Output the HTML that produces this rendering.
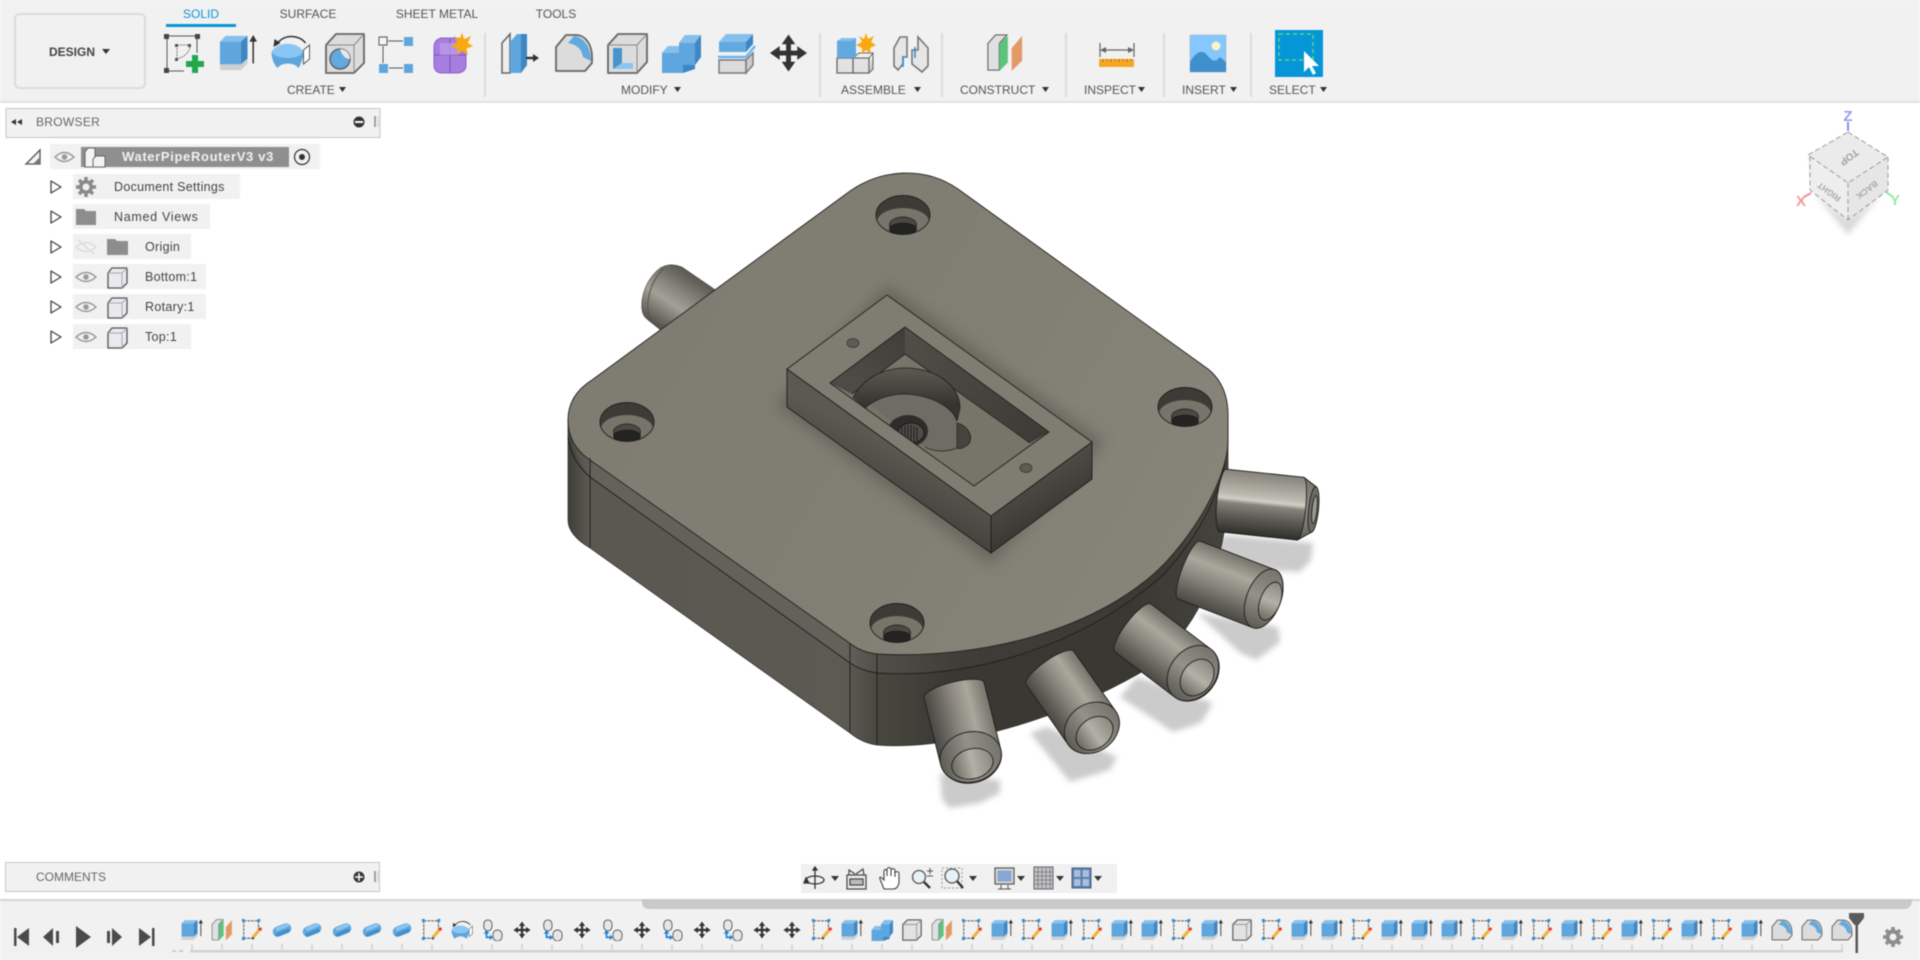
<!DOCTYPE html>
<html><head><meta charset="utf-8"><title>Fusion</title>
<style>
html,body{margin:0;padding:0;background:#fff;width:1920px;height:960px;overflow:hidden}
svg.main{position:absolute;left:0;top:0;filter:blur(.5px)}
text{font-family:"Liberation Sans",sans-serif}
</style></head><body>
<svg class="main" width="1920" height="960" viewBox="0 0 1920 960" xmlns="http://www.w3.org/2000/svg">
<defs>
<filter id="b2" x="-30%" y="-30%" width="160%" height="160%"><feGaussianBlur stdDeviation="3"/></filter>
<filter id="b6" x="-30%" y="-30%" width="160%" height="160%"><feGaussianBlur stdDeviation="7"/></filter>
<linearGradient id="cyl" x1="0" y1="0" x2="0" y2="1"><stop offset="0" stop-color="#75736a"/><stop offset=".3" stop-color="#aaa89d"/><stop offset=".55" stop-color="#8c8980"/><stop offset=".85" stop-color="#5e5c55"/><stop offset="1" stop-color="#4a4943"/></linearGradient>
<linearGradient id="cyl1" x1="0" y1="0" x2="0" y2="1"><stop offset="0" stop-color="#85837a"/><stop offset=".38" stop-color="#bdbbb0"/><stop offset=".45" stop-color="#d2d0c6"/><stop offset=".52" stop-color="#85837a"/><stop offset=".72" stop-color="#5e5c55"/><stop offset="1" stop-color="#2f2e2b"/></linearGradient>
<linearGradient id="cyl6" gradientUnits="userSpaceOnUse" x1="703" y1="283" x2="669" y2="335"><stop offset="0" stop-color="#5c5b54"/><stop offset=".35" stop-color="#8a887f"/><stop offset=".55" stop-color="#a3a197"/><stop offset="1" stop-color="#4f4e48"/></linearGradient>
<linearGradient id="tipg" x1="0" y1="0" x2="0" y2="1"><stop offset="0" stop-color="#75736b"/><stop offset=".5" stop-color="#93918a"/><stop offset="1" stop-color="#5c5b54"/></linearGradient>
<linearGradient id="bore" x1="0" y1="0" x2="0" y2="1"><stop offset="0" stop-color="#8c8a80"/><stop offset=".5" stop-color="#b3b1a7"/><stop offset="1" stop-color="#6b6960"/></linearGradient>
<linearGradient id="bodyg" gradientUnits="userSpaceOnUse" x1="568" y1="0" x2="1228" y2="0"><stop offset="0" stop-color="#3f3e39"/><stop offset=".03" stop-color="#5a5850"/><stop offset=".42" stop-color="#5c5a53"/><stop offset=".47" stop-color="#48473f"/><stop offset=".58" stop-color="#393833"/><stop offset=".85" stop-color="#393833"/><stop offset="1" stop-color="#45443e"/></linearGradient>
<linearGradient id="stripg" gradientUnits="userSpaceOnUse" x1="568" y1="0" x2="1228" y2="0"><stop offset="0" stop-color="#4a4943"/><stop offset=".04" stop-color="#64625b"/><stop offset=".42" stop-color="#63615a"/><stop offset=".47" stop-color="#4f4e47"/><stop offset=".6" stop-color="#3e3d38"/><stop offset=".9" stop-color="#3b3a35"/><stop offset="1" stop-color="#4d4c46"/></linearGradient>
<linearGradient id="plateg" gradientUnits="userSpaceOnUse" x1="600" y1="250" x2="1200" y2="600"><stop offset="0" stop-color="#7f7c72"/><stop offset=".5" stop-color="#817e73"/><stop offset="1" stop-color="#88857b"/></linearGradient>
<linearGradient id="fl1" gradientUnits="userSpaceOnUse" x1="850" y1="500" x2="880" y2="440"><stop offset="0" stop-color="#3c3b37"/><stop offset="1" stop-color="#5b5951"/></linearGradient>
<linearGradient id="fl2" gradientUnits="userSpaceOnUse" x1="1060" y1="510" x2="1030" y2="460"><stop offset="0" stop-color="#3a3934"/><stop offset="1" stop-color="#55534c"/></linearGradient>
<linearGradient id="wl" gradientUnits="userSpaceOnUse" x1="905" y1="330" x2="860" y2="385"><stop offset="0" stop-color="#3f3e39"/><stop offset="1" stop-color="#4c4b45"/></linearGradient>
<linearGradient id="wr" gradientUnits="userSpaceOnUse" x1="900" y1="330" x2="1040" y2="440"><stop offset="0" stop-color="#514f48"/><stop offset="1" stop-color="#3c3b37"/></linearGradient>
<linearGradient id="cw" gradientUnits="userSpaceOnUse" x1="905" y1="368" x2="905" y2="405"><stop offset="0" stop-color="#5c5a52"/><stop offset="1" stop-color="#353430"/></linearGradient>
<clipPath id="pock"><polygon points="905,327 1049,432 974,486 830,383"/></clipPath>
<clipPath id="ho"><ellipse cx="0" cy="0" rx="27" ry="19.5"/></clipPath>

<g id="chole">
<ellipse rx="27" ry="19.5" fill="#3c3b36"/>
<g clip-path="url(#ho)">
<ellipse cx="0" cy="7" rx="26" ry="14" fill="#777469"/>
<ellipse cx="0" cy="10" rx="13.5" ry="8" fill="#4a4944" stroke="#1d1d1b" stroke-width=".8"/>
<ellipse cx="0" cy="14" rx="13.5" ry="6" fill="#232321" stroke="#111" stroke-width=".6"/>
</g>
<ellipse rx="27" ry="19.5" fill="none" stroke="#1f1f1d" stroke-width=".9"/>
</g>

<symbol id="ext" viewBox="0 0 40 40">
<polygon points="1,8 23,8 23,32 1,32" fill="#5ea6dd"/><polygon points="1,8 7,2 30,2 23,8" fill="#85bfec"/><polygon points="23,8 30,2 30,26 23,32" fill="#3e86c4"/>
<polygon points="1,32 23,32 30,26 30,31 23,38 1,38" fill="#cfcfcf"/>
<path d="M36 7V31" stroke="#333" stroke-width="1.6"/><polygon points="36,1 32,8 40,8" fill="#333"/>
</symbol>
<symbol id="sk" viewBox="0 0 24 24">
<path d="M3 2H19M3 2V21M3 21H13M19 2V12" stroke="#444" stroke-width="1" stroke-dasharray="3 1" fill="none"/>
<g fill="#1e90ee"><rect x="1" y="0" width="3" height="3"/><rect x="18" y="0" width="3" height="3"/><rect x="1" y="20" width="3" height="3"/></g>
<path d="M13 20L20 12" stroke="#f2b23c" stroke-width="3.4"/><circle cx="21" cy="11" r="1.8" fill="#ee3b3b"/><circle cx="13" cy="21" r="1.4" fill="#555"/>
</symbol>
<symbol id="cy" viewBox="0 0 24 24">
<g transform="rotate(-22 12 12)"><rect x="1.5" y="6.5" width="21" height="11" rx="5.5" fill="#62a9df"/><rect x="6" y="7.5" width="15" height="3.5" rx="1.7" fill="#8cc6f0"/><rect x="3" y="13" width="17" height="4" rx="2" fill="#458fca"/></g>
</symbol>
<symbol id="al" viewBox="0 0 24 24">
<rect x="3" y="1" width="9" height="12" rx="4.5" fill="#e6e6e6" stroke="#555"/><rect x="13" y="12" width="10" height="12" rx="4.8" fill="#e6e6e6" stroke="#555"/>
<path d="M6 14V20H11" stroke="#1b7fd6" stroke-width="1.8" fill="none"/><polygon points="13,20 9.5,17 9.5,23" fill="#1b7fd6"/><polygon points="6,12 3,16 9,16" fill="#1b7fd6"/>
</symbol>
<symbol id="mv" viewBox="0 0 40 40"><path d="M20 1L27 11H22.5V17.5H29V13L39 20L29 27V22.5H22.5V29H27L20 39L13 29H17.5V22.5H11V27L1 20L11 13V17.5H17.5V11H13Z" fill="#333"/></symbol>
<symbol id="bx" viewBox="0 0 24 24"><path d="M2 6L7 1H22V18L17 23H2Z" fill="#e2e2e2" stroke="#666" stroke-width="1.4" stroke-linejoin="round"/><path d="M2 6H17V23M17 6L22 1" fill="none" stroke="#999"/></symbol>
<symbol id="cb" viewBox="0 0 40 40">
<polygon points="18,10 24,2 40,2 40,24 34,32 18,32" fill="#5ea6dd"/><polygon points="18,10 24,2 40,2 34,10" fill="#85bfec"/><polygon points="34,10 40,2 40,24 34,32" fill="#3e86c4"/>
<polygon points="1,20 7,13 22,13 22,40 1,40" fill="#5ea6dd"/><polygon points="1,20 7,13 18,13 18,20" fill="#85bfec"/><polygon points="22,32 34,32 34,36 22,40" fill="#3e86c4"/>
</symbol>
<symbol id="cn" viewBox="0 0 40 40">
<polygon points="2,10 10,1 22,1 14,10 14,38 2,38" fill="#e0e0e0" stroke="#666" stroke-width="1.2"/>
<polygon points="14,10 23,2 23,30 14,39" fill="#5cc27c"/>
<polygon points="27,15 38,2 38,28 27,39" fill="#e39a66"/>
</symbol>
<symbol id="fl" viewBox="0 0 40 40">
<path d="M2 14L12 2H22C31 2 38 11 38 24V30L31 38H2Z" fill="#dcdcdc" stroke="#666" stroke-width="1.8" stroke-linejoin="round"/>
<path d="M20 3C29 4 37 13 37 28L29 24C28 17 24 12 14 10Z" fill="#62a9df"/>
</symbol>
<symbol id="rv" viewBox="0 0 40 40">
<path d="M6 13C12 2 28 2 35 11" fill="none" stroke="#333" stroke-width="1.5"/><polygon points="3,15 4,7 10,11" fill="#333"/>
<path d="M1 20C6 9 28 9 33 20L28 36C24 30 11 30 7 36Z" fill="#8ac6f4"/>
<path d="M1 20C1 27 4 33 7 36C11 30 24 30 28 36C30 33 33 26 33 20C28 28 6 28 1 20Z" fill="#5da5dc"/>
<polygon points="33,18 39,13 39,27 33,32" fill="#fff" stroke="#555"/>
</symbol>
</defs>

<rect width="1920" height="960" fill="#fff"/>

<!-- shadows -->
<g fill="#cbcbcb" filter="url(#b2)">
<polygon points="1227,535 1313,543 1311,560 1300,572 1262,570 1205,548"/>
<polygon points="1197,613 1278,627 1280,642 1257,660 1240,653"/>
<polygon points="1137,677 1213,703 1201,723 1173,732 1120,697"/>
<polygon points="1047,727 1117,757 1110,770 1070,782 1030,733"/>
<polygon points="940,773 1000,780 1000,793 980,803 950,808 942,800"/>
</g>

<!-- back nozzle N6 -->
<path d="M720,293 L682,267 Q670,262 660,268 Q645,280 642,300 Q640,315 648,320 L668,336Z" fill="url(#cyl6)" stroke="#3a3a36" stroke-width=".5"/>
<path d="M664,268 Q650,282 648,302 Q647,314 652,321" fill="none" stroke="#55534c" stroke-width="1"/>

<!-- body -->
<path d="M568,420 L568,520 Q568,535 590,548 L850,733 Q862,743 877,745 C935,750 1040,730 1140,673 C1197,635 1223,570 1228,500 L1228,420 Z" fill="url(#bodyg)" stroke="#2a2a28" stroke-width=".7"/>

<!-- nozzles -->
<g stroke="#1e1e1c" stroke-width=".9">
<g transform="translate(1223,500) rotate(6)">
<path d="M0,-31H78L91,-23V23L78,32H0A6,31 0 0 1 0,-31Z" fill="url(#cyl1)"/>
<path d="M78,-31L91,-23V23L78,32A5,31 0 0 0 78,-31Z" fill="url(#tipg)"/>
<ellipse cx="91" cy="0" rx="5" ry="23" fill="#6c6a62"/><ellipse cx="92" cy="0" rx="2.5" ry="14" fill="#9b9990"/>
</g>
<g transform="translate(1189,570) rotate(21)">
<path d="M0,-31H80A17,31 0 0 1 80,31H0A7,31 0 0 1 0,-31Z" fill="url(#cyl)"/>
<ellipse cx="80" cy="0" rx="17" ry="31" fill="url(#tipg)"/><ellipse cx="87" cy="0" rx="10" ry="20" fill="url(#bore)"/>
</g>
<g transform="translate(1133,628) rotate(37)">
<path d="M0,-30H75A24,30 0 0 1 75,30H0A8,30 0 0 1 0,-30Z" fill="url(#cyl)"/>
<ellipse cx="75" cy="0" rx="23" ry="30" fill="url(#tipg)"/><ellipse cx="81" cy="1" rx="15" ry="20" fill="url(#bore)"/>
</g>
<g transform="translate(1050,668) rotate(55)">
<path d="M0,-29H73A24,29 0 0 1 73,29H0A8,29 0 0 1 0,-29Z" fill="url(#cyl)"/>
<ellipse cx="73" cy="0" rx="24" ry="29" fill="url(#tipg)"/><ellipse cx="79" cy="1" rx="15" ry="20" fill="url(#bore)"/>
</g>
<g transform="translate(954,690) rotate(76)">
<path d="M0,-31H69A26,31 0 0 1 69,31H0A8,31 0 0 1 0,-31Z" fill="url(#cyl)"/>
<ellipse cx="69" cy="0" rx="25" ry="31" fill="url(#tipg)"/><ellipse cx="76" cy="0" rx="15" ry="21" fill="url(#bore)"/>
</g>
</g>

<!-- seam strip -->
<path d="M568,420 Q568,445 590,477 L850,663 Q862,671 877,673 C980,680 1090,640 1163,575 C1205,530 1226,480 1228,440 L1228,410 L900,300Z" fill="url(#stripg)"/>
<path d="M568,438 Q572,462 590,477 L850,663 Q862,671 877,673 C980,680 1090,640 1163,575 C1205,530 1226,480 1228,440" fill="none" stroke="#1e1e1c" stroke-width=".9"/>

<!-- plate -->
<path d="M846,194 C880,168 925,166 958,189 L1208,369 Q1228,385 1228,415 L1228,440 C1228,470 1205,520 1165,563 C1100,630 980,660 877,654 Q860,652 848,642 L590,460 Q568,445 568,420 Q568,395 592,380 Z" fill="url(#plateg)" stroke="#22221f" stroke-width=".9"/>
<path d="M590,458V548M850,643V733M877,654V745" stroke="#1e1e1c" stroke-width=".9" fill="none"/>

<!-- AO -->
<polygon points="887,285 1105,442 991,565 775,405" fill="#3f3e38" opacity=".36" filter="url(#b6)"/>
<!-- block faces -->
<polygon points="787,369 991,516 991,553 787,407" fill="url(#fl1)" stroke="#1e1e1c" stroke-width=".9"/>
<polygon points="991,516 1092,442 1092,479 991,553" fill="url(#fl2)" stroke="#1e1e1c" stroke-width=".9"/>
<!-- pocket -->
<polygon points="905,327 1049,432 974,486 830,383" fill="#77746a"/>
<g clip-path="url(#pock)">
<polygon points="905,327 905,354 852,394 830,383" fill="url(#wl)"/>
<polygon points="905,327 905,354 1030,443 1049,432" fill="url(#wr)"/>
<path d="M905,354L852,394M905,354L1030,443" stroke="#22221f" stroke-width=".8" fill="none"/>
<path d="M853,398 C862,378 885,368 905,368 C935,368 960,385 960,408 L956,424 L957,448 C945,453 930,451 925,447 L915,440 L870,405 Z" fill="#6f6c63"/>
<path d="M853,398 C862,378 885,368 905,368 C935,368 960,385 960,408 L957,421 C952,406 930,395 905,394 C885,394 872,402 865,408 Z" fill="url(#cw)"/>
<path d="M853,398 C862,378 885,368 905,368 C935,368 960,385 960,408 L957,421 M865,408 C872,402 885,394 905,394 C930,395 952,406 957,421" fill="none" stroke="#1e1e1c" stroke-width=".8"/>
<path d="M957,423 C972,427 974,442 966,446 C962,449 958,449 957,448Z" fill="#45443f" stroke="#1e1e1c" stroke-width=".7"/>
<path d="M957,448 C945,453 932,451 925,447" fill="none" stroke="#1e1e1c" stroke-width=".7"/>
<ellipse cx="908" cy="431" rx="20" ry="16" fill="#2e2d2a"/><ellipse cx="911" cy="433" rx="13" ry="10" fill="#4e4d48" stroke="#1a1a18"/>
<path d="M902,427V439M905,426V441M908,425V442M911,425V443M914,426V442M917,427V441" stroke="#1e1e1c" stroke-width="1"/>
</g>
<path fill-rule="evenodd" d="M887,295L1092,442L991,516L787,369Z M905,327L830,383L974,486L1049,432Z" fill="#7f7c72" stroke="#1e1e1c" stroke-width=".9"/>
<ellipse cx="853" cy="343" rx="6" ry="4.5" fill="#5e5c54" stroke="#33322e" stroke-width=".7"/>
<ellipse cx="1026" cy="468" rx="6" ry="4.5" fill="#5e5c54" stroke="#33322e" stroke-width=".7"/>

<!-- c'bore holes -->
<use href="#chole" x="903" y="215"/>
<use href="#chole" x="627" y="422"/>
<use href="#chole" x="897" y="623"/>
<use href="#chole" x="1185" y="407"/>

<!-- viewcube -->
<g>
<polygon points="1812,190 1848,220 1884,190 1848,235" fill="#aaa" opacity=".45" filter="url(#b2)"/>
<polygon points="1848,132 1888,157 1888,190 1848,220 1810,190 1808,155" fill="#efefef"/>
<polygon points="1848,132 1888,157 1848,183 1808,155" fill="#ebebeb"/>
<polygon points="1848,183 1888,157 1888,190 1848,220" fill="#e6e6e6"/>
<polygon points="1848,183 1808,155 1810,190 1848,220" fill="#eeeeee"/>
<path d="M1848,132L1888,157L1848,183L1808,155ZM1848,183V220M1888,157V190L1848,220L1810,190V155" fill="none" stroke="#9c9c9c" stroke-width="1" stroke-dasharray="5 3"/>
<path d="M1848,131V122" stroke="#8f8ff0" stroke-width="2"/><path d="M1811,193L1804,197" stroke="#f08f8f" stroke-width="2"/><path d="M1886,192L1893,197" stroke="#8fe89f" stroke-width="2"/>
<text x="1848" y="121" font-size="15" font-weight="bold" fill="#9a9aee" text-anchor="middle">Z</text>
<text x="1801" y="206" font-size="15" font-weight="bold" fill="#f29a9a" text-anchor="middle">X</text>
<text x="1895" y="205" font-size="15" font-weight="bold" fill="#9ae8a8" text-anchor="middle">Y</text>
<text transform="translate(1849,157) rotate(143)" font-size="10" font-weight="bold" fill="#a0a0a0" text-anchor="middle" y="3">TOP</text>
<text transform="translate(1829,192) rotate(216)" font-size="8.5" font-weight="bold" fill="#a8a8a8" text-anchor="middle" y="3">RIGHT</text>
<text transform="translate(1867,190) rotate(143)" font-size="8.5" font-weight="bold" fill="#a8a8a8" text-anchor="middle" y="3">BACK</text>
</g>

<!-- toolbar -->
<rect x="0" y="0" width="1920" height="101" fill="#f1f1f1"/>
<rect x="0" y="101" width="1920" height="2" fill="#e2e2e2"/>
<rect x="15" y="14" width="130" height="74" rx="5" fill="#f1f1f1" stroke="#dcdcdc" stroke-width="2"/>
<text x="49" y="56" font-size="12" font-weight="bold" fill="#444">DESIGN</text>
<polygon points="102,49 110,49 106,54" fill="#333"/>
<g font-size="12" fill="#555" text-anchor="middle">
<text x="201" y="18" fill="#0d96d8">SOLID</text><text x="308" y="18">SURFACE</text><text x="437" y="18">SHEET METAL</text><text x="556" y="18">TOOLS</text>
</g>
<rect x="166" y="24" width="70" height="3" fill="#0696d7"/>
<g stroke="#dcdcdc" stroke-width="2"><path d="M485,33V97M820,33V97M942,33V97M1066,33V97M1164,33V97M1251,33V97"/></g>
<g font-size="12" fill="#555">
<text x="287" y="94">CREATE</text><text x="621" y="94">MODIFY</text><text x="841" y="94">ASSEMBLE</text><text x="960" y="94">CONSTRUCT</text><text x="1084" y="94">INSPECT</text><text x="1182" y="94">INSERT</text><text x="1269" y="94">SELECT</text>
</g>
<g fill="#333"><polygon points="339,87 346,87 342.5,92"/><polygon points="674,87 681,87 677.5,92"/><polygon points="914,87 921,87 917.5,92"/><polygon points="1042,87 1049,87 1045.5,92"/><polygon points="1138,87 1145,87 1141.5,92"/><polygon points="1230,87 1237,87 1233.5,92"/><polygon points="1320,87 1327,87 1323.5,92"/></g>

<!-- Create: sketch -->
<g transform="translate(164,33)">
<path d="M3,3H33M3,3V38M3,38H20M33,3V20" stroke="#555" stroke-width="1" fill="none"/>
<g fill="#444"><rect x="0" y="1" width="5" height="5"/><rect x="31" y="1" width="5" height="5"/><rect x="0" y="35" width="5" height="5"/></g>
<path d="M13,12V26M13,12H26Q26,22 13,26" stroke="#777" fill="none" stroke-dasharray="2 1"/>
<g fill="#555"><rect x="11" y="11" width="3" height="3"/><rect x="24" y="11" width="3" height="3"/><rect x="11" y="25" width="3" height="3"/></g>
<rect x="22" y="28" width="18" height="6" fill="#21a84c"/><rect x="28" y="22" width="6" height="18" fill="#21a84c"/>
</g>
<use href="#ext" x="219" y="33" width="38" height="40"/>
<use href="#rv" x="270" y="32" width="41" height="40"/>
<!-- hole box -->
<g transform="translate(325,33)">
<path d="M1,12L11,1H39V30L29,40H1Z" fill="#dcdcdc" stroke="#666" stroke-width="1.8" stroke-linejoin="round"/>
<path d="M1,12H29V40M29,12L39,1" fill="none" stroke="#888"/>
<circle cx="15" cy="26" r="10" fill="#62a9df" stroke="#666" stroke-width="1.5"/><path d="M15,16A10,10 0 0 1 25,26Q18,26 15,16Z" fill="#e8e8e8"/>
</g>
<!-- pattern -->
<g transform="translate(379,37)">
<rect x="0" y="0" width="8" height="8" fill="#f4f4f4" stroke="#555"/><rect x="25" y="0" width="9" height="9" fill="#5ea6dd"/><rect x="0" y="27" width="9" height="9" fill="#5ea6dd"/><rect x="25" y="27" width="9" height="9" fill="#5ea6dd"/>
<path d="M9,4H24M4,9V26M10,31H24" stroke="#555" fill="none"/>
</g>
<!-- purple -->
<g transform="translate(432,33)">
<path d="M2,14Q2,7 9,5L24,5Q33,6 34,14V32Q34,39 26,40H9Q2,39 2,32Z" fill="#a77de0" stroke="#8a63c8"/>
<path d="M2,22H34M18,6V40" stroke="#7b55ba" stroke-width="1"/><path d="M8,10H26V22H8Z" fill="#bb9aea" opacity=".8"/>
<polygon points="30,1 32,7 38,4 35,10 40,13 34,15 35,21 30,17 26,21 26,15 20,13 26,10 23,4 28,7" fill="#f7a90f" stroke="#f7a90f"/>
</g>
<!-- press pull -->
<g transform="translate(501,33)">
<path d="M1,10L9,1V40H1Z" fill="#eee" stroke="#666" stroke-width="1.5"/>
<polygon points="9,9 16,1 26,1 26,32 20,40 9,40" fill="#5ea6dd"/><polygon points="20,1 26,1 26,32 20,40" fill="#3e86c4"/>
<path d="M25,25H33" stroke="#333" stroke-width="2.4"/><polygon points="38,25 32,21 32,29" fill="#333"/>
</g>
<use href="#fl" x="554" y="33" width="40" height="40"/>
<!-- shell -->
<g transform="translate(607,33)">
<path d="M1,12L11,1H40V29L30,40H1Z" fill="#dcdcdc" stroke="#666" stroke-width="1.8" stroke-linejoin="round"/>
<path d="M1,12H30V40M30,12L40,1" fill="none" stroke="#888"/>
<polygon points="6,15 15,15 15,30 26,30 26,36 6,36" fill="#4993cd"/><polygon points="15,30 26,30 26,36 6,36" fill="#8cc6f0"/>
</g>
<use href="#cb" x="661" y="33" width="40" height="40"/>
<!-- split -->
<g transform="translate(718,33)">
<polygon points="1,9 28,9 28,19 1,19" fill="#62a9df"/><polygon points="1,9 8,1 35,1 28,9" fill="#85bfec"/><polygon points="28,9 35,1 35,11 28,19" fill="#3e86c4"/>
<path d="M0,24H28L37,13" stroke="#6cb5ec" stroke-width="2.4" fill="none"/>
<path d="M1,27H28V40H1Z" fill="#dcdcdc" stroke="#777" stroke-width="1.4"/><path d="M28,27L35,20V32L28,40Z" fill="#ccc" stroke="#777" stroke-width="1.4"/>
</g>
<use href="#mv" x="769" y="33" width="39" height="40"/>
<!-- new component -->
<g transform="translate(836,33)">
<path d="M1,25H20V40H1Z" fill="#e2e2e2" stroke="#666" stroke-width="1.3"/><path d="M17,25H33V40H17Z" fill="#e2e2e2" stroke="#666" stroke-width="1.3"/><polygon points="17,25 23,20 37,20 33,25" fill="#eee" stroke="#666"/><path d="M33,40L37,36V20" fill="#ccc" stroke="#666"/>
<polygon points="1,8 6,5 20,5 20,25 1,25" fill="#62a9df"/><polygon points="1,8 6,5 20,5 16,8" fill="#85bfec"/>
<polygon points="30,0 32,6 38,3 35,9 40,12 34,15 35,21 30,17 26,21 26,15 20,12 26,9 23,3 28,6" fill="#f7a90f"/>
</g>
<!-- joint -->
<g transform="translate(892,36)" fill="none" stroke="#777" stroke-width="1.6">
<path d="M2,12L8,1H15V21H11V28L6,34L2,30Z" fill="#e6e6e6"/><path d="M36,12L26,1V14H20V28L30,36L36,30Z" fill="#e6e6e6"/>
<path d="M11,20V31M23,11V22" stroke="#2a90e0"/>
</g>
<use href="#cn" x="986" y="33" width="38" height="40"/>
<!-- inspect -->
<g transform="translate(1099,43)">
<path d="M1,0V14M35,0V14M3,7H33" stroke="#666" fill="none" stroke-width="1.2"/><polygon points="1,7 7,4 7,10" fill="#666"/><polygon points="35,7 29,4 29,10" fill="#666"/>
<rect x="0" y="16" width="35" height="8" fill="#f5a623"/><path d="M4,16v3M8,16v2M12,16v3M16,16v2M20,16v3M24,16v2M28,16v3M32,16v2" stroke="#a96f10"/>
</g>
<!-- insert -->
<g transform="translate(1190,35)">
<rect x="0" y="0" width="36" height="37" fill="#85c7ff" stroke="#aaa" stroke-width=".5"/>
<circle cx="26" cy="11" r="4.5" fill="#f7f5c4"/><path d="M0,27C6,17 12,14 17,20C22,26 25,28 30,22L36,27V37H0Z" fill="#3f8fcc"/>
</g>
<!-- select -->
<rect x="1275" y="30" width="48" height="47" fill="#0696d7"/>
<rect x="1279" y="34" width="34" height="26" fill="none" stroke="#65e07a" stroke-width="1.3" stroke-dasharray="4 3"/>
<path d="M1304,51V72L1309,67L1313,75L1316,73L1312,66H1319Z" fill="#fff"/>

<!-- browser panel -->
<rect x="6" y="108.5" width="374" height="29" fill="#f1f1f1" stroke="#c6c6c6"/>
<polygon points="16,119 11,122 16,125" fill="#333"/><polygon points="22,119 17,122 22,125" fill="#333"/>
<text x="36" y="126" font-size="12" fill="#666" letter-spacing=".3">BROWSER</text>
<circle cx="359" cy="122" r="5.5" fill="#333"/><rect x="355" y="121" width="8" height="2" fill="#fff"/>
<path d="M375,116V127" stroke="#888" stroke-width="1.5"/><path d="M378,116V127" stroke="#ccc"/>

<polygon points="26,164 40,150 40,164" fill="#f4f4f4" stroke="#555" stroke-width="1.3"/><polygon points="33,164 40,157 40,164" fill="#777"/>
<rect x="50" y="144" width="270" height="25" fill="#f1f1f1"/>
<rect x="81" y="147" width="208" height="20" fill="#8f8f8f"/>
<text x="122" y="161" font-size="13" font-weight="bold" fill="#f1f1f1" letter-spacing=".65">WaterPipeRouterV3 v3</text>
<g fill="#f3f3f3" stroke="#666"><path d="M85,152L88,148H95V167H85Z"/><path d="M93,159L96,156H105V167H93Z"/></g>
<circle cx="302" cy="157" r="7.5" fill="none" stroke="#333" stroke-width="1.2"/><circle cx="302" cy="157" r="3" fill="#333"/>

<g fill="#f1f1f1">
<rect x="73" y="174" width="167" height="25"/><rect x="73" y="204" width="137" height="25"/><rect x="73" y="234" width="118" height="25"/><rect x="73" y="264" width="133" height="25"/><rect x="73" y="294" width="133" height="25"/><rect x="73" y="324" width="118" height="25"/>
</g>
<g fill="#fff" stroke="#444" stroke-width="1.3" stroke-linejoin="round">
<path d="M51,181L61,187L51,193Z"/><path d="M51,211L61,217L51,223Z"/><path d="M51,241L61,247L51,253Z"/><path d="M51,271L61,277L51,283Z"/><path d="M51,301L61,307L51,313Z"/><path d="M51,331L61,337L51,343Z"/>
</g>
<g font-size="12.5" fill="#444" letter-spacing=".3">
<text x="114" y="191">Document Settings</text><text x="114" y="221" letter-spacing=".7">Named Views</text><text x="145" y="251">Origin</text><text x="145" y="281">Bottom:1</text><text x="145" y="311">Rotary:1</text><text x="145" y="341">Top:1</text>
</g>
<!-- eyes -->
<g fill="none" stroke="#9a9a9a" stroke-width="1.5">
<path d="M55,157Q64,148 74,157Q64,166 55,157Z"/><circle cx="64.5" cy="157" r="2.8" fill="#9a9a9a" stroke="none"/>
<g><path d="M76,277Q86,268 96,277Q86,286 76,277Z"/><circle cx="86" cy="277" r="2.8" fill="#9a9a9a" stroke="none"/></g>
<g><path d="M76,307Q86,298 96,307Q86,316 76,307Z"/><circle cx="86" cy="307" r="2.8" fill="#9a9a9a" stroke="none"/></g>
<g><path d="M76,337Q86,328 96,337Q86,346 76,337Z"/><circle cx="86" cy="337" r="2.8" fill="#9a9a9a" stroke="none"/></g>
<g stroke="#dcdcdc"><path d="M76,247Q86,238 96,247Q86,256 76,247Z"/><path d="M78,240L94,254"/></g>
</g>
<!-- gear -->
<g transform="translate(86,187)" fill="#8a8a8a"><circle r="7"/><g stroke="#8a8a8a" stroke-width="3.5"><path d="M0,-10V10M-10,0H10M-7,-7L7,7M-7,7L7,-7"/></g><circle r="3.5" fill="#f1f1f1"/></g>
<!-- folders -->
<g fill="#8d8d8d"><path d="M76,209H84L86,211H96V225H76Z"/><path d="M107,239H115L117,241H128V255H107Z"/></g>
<!-- bodies -->
<g fill="#e9e9f0" stroke="#555" stroke-width="1.3" stroke-linejoin="round">
<path d="M108,273L112,268H127V283L122,288H108Z"/><path d="M108,303L112,298H127V313L122,318H108Z"/><path d="M108,333L112,328H127V343L122,348H108Z"/>
</g>
<g fill="none" stroke="#aaa"><path d="M108,273H122V288M122,273L127,268M108,303H122V318M122,303L127,298M108,333H122V348M122,333L127,328"/></g>

<!-- comments -->
<rect x="5.5" y="862.5" width="374" height="29" fill="#f1f1f1" stroke="#c6c6c6"/>
<text x="36" y="881" font-size="12" fill="#666">COMMENTS</text>
<circle cx="359" cy="877" r="5.5" fill="#333"/><path d="M355,877H363M359,873V881" stroke="#fff" stroke-width="1.5"/>
<path d="M375,871V882" stroke="#888" stroke-width="1.5"/><path d="M378,871V882" stroke="#ccc"/>

<!-- nav bar -->
<rect x="801" y="864" width="316" height="29" fill="#f0f0f0"/>
<g transform="translate(804,868)" fill="none" stroke="#333" stroke-width="1.3">
<path d="M11,1V21"/><ellipse cx="11" cy="12" rx="9" ry="4"/><polygon points="9,2 11,-1 13,2" fill="#333"/><polygon points="2,10 0,15 5,15" fill="#333"/>
</g>
<g transform="translate(846,868)" fill="none" stroke="#444" stroke-width="1.2">
<rect x="1" y="7" width="19" height="14" fill="#e8e8e8"/><rect x="4" y="11" width="13" height="6" fill="#bbb"/><path d="M3,7V2L9,6M10,6L17,1L18,7"/>
</g>
<g transform="translate(879,867)" fill="#fff" stroke="#444" stroke-width="1.1"><path d="M5,22L1,12Q0,9 3,11L5,13V4Q6,1 8,4V9V2Q10,-1 12,2V9V3Q14,0 16,3V10V6Q18,3 20,6V15Q19,22 14,22Z"/></g>
<g transform="translate(911,868)"><circle cx="8" cy="9" r="6.5" fill="#e6f0f7" stroke="#555" stroke-width="1.3"/><path d="M13,14L19,20" stroke="#333" stroke-width="2.4"/><path d="M16,3H22M19,0V6M16,8H22" stroke="#555" stroke-width="1.1"/></g>
<g transform="translate(942,866)"><rect x="0" y="2" width="20" height="20" fill="none" stroke="#999" stroke-dasharray="2 2"/><circle cx="10" cy="10" r="7" fill="#e6f0f7" stroke="#555" stroke-width="1.3"/><path d="M15,15L21,22" stroke="#333" stroke-width="2.4"/></g>
<g transform="translate(994,867)"><rect x="1" y="1" width="19" height="16" fill="#d8d8d8" stroke="#555" stroke-width="1.2"/><rect x="3.5" y="3.5" width="14" height="11" fill="#86a7d4"/><path d="M7,18V22H14V18" fill="none" stroke="#555"/><path d="M4,22H17" stroke="#555"/></g>
<g transform="translate(1033,866)"><rect x="1" y="1" width="19" height="22" fill="#c2c2ca" stroke="#666"/><path d="M5,1V23M9,1V23M13,1V23M17,1V23M1,6H20M1,10H20M1,14H20M1,18H20" stroke="#777" stroke-width=".8"/></g>
<g transform="translate(1072,868)"><rect x="0" y="0" width="19" height="20" fill="#5d7eaa" stroke="#44618c"/><g fill="#a8bfdc"><rect x="2" y="2" width="6.5" height="7"/><rect x="10.5" y="2" width="6.5" height="7"/><rect x="2" y="11" width="6.5" height="7"/><rect x="10.5" y="11" width="6.5" height="7"/></g></g>
<g fill="#333"><polygon points="831,876 839,876 835,881"/><polygon points="969,876 977,876 973,881"/><polygon points="1017,876 1025,876 1021,881"/><polygon points="1056,876 1064,876 1060,881"/><polygon points="1094,876 1102,876 1098,881"/></g>

<!-- timeline -->
<rect x="0" y="900" width="1920" height="60" fill="#f1f1f1"/>
<rect x="0" y="899" width="1920" height="2" fill="#d4d4d4"/>
<path d="M643,899H1912Q1912,909 1904,909H650Q642,909 642,902Z" fill="#c9c9c9"/>
<g fill="#4a4a4a">
<rect x="14" y="928" width="2.5" height="18"/><polygon points="29,928 29,946 17,937"/>
<polygon points="43,937 53,928 53,946"/><rect x="56" y="931" width="3" height="12"/>
<polygon points="76,926 76,948 91,937"/>
<rect x="107" y="931" width="3" height="12"/><polygon points="112,928 112,946 122,937"/>
<polygon points="139,928 139,946 151,937"/><rect x="152" y="928" width="2.5" height="18"/>
</g>
<path d="M172,951H176M179,951H183" stroke="#ccc" stroke-width="2"/>
<rect x="190" y="950" width="1653" height="2.5" fill="#d2d2d2"/>
<path d="M192,944v6M222,944v6M252,944v6M282,944v6M312,944v6M342,944v6M372,944v6M402,944v6M432,944v6M462,944v6M492,944v6M522,944v6M552,944v6M582,944v6M612,944v6M642,944v6M672,944v6M702,944v6M732,944v6M762,944v6M792,944v6M822,944v6M852,944v6M882,944v6M912,944v6M942,944v6M972,944v6M1002,944v6M1032,944v6M1062,944v6M1092,944v6M1122,944v6M1152,944v6M1182,944v6M1212,944v6M1242,944v6M1272,944v6M1302,944v6M1332,944v6M1362,944v6M1392,944v6M1422,944v6M1452,944v6M1482,944v6M1512,944v6M1542,944v6M1572,944v6M1602,944v6M1632,944v6M1662,944v6M1692,944v6M1722,944v6M1752,944v6M1782,944v6M1812,944v6M1842,944v6" stroke="#cfcfcf" stroke-width="1.5"/>

<g>
<use href="#ext" x="181" y="919" width="22" height="22"/>
<use href="#cn" x="211" y="919" width="22" height="22"/>
<use href="#sk" x="241" y="919" width="22" height="22"/>
<use href="#cy" x="271" y="919" width="22" height="22"/><use href="#cy" x="301" y="919" width="22" height="22"/><use href="#cy" x="331" y="919" width="22" height="22"/><use href="#cy" x="361" y="919" width="22" height="22"/><use href="#cy" x="391" y="919" width="22" height="22"/>
<use href="#sk" x="421" y="919" width="22" height="22"/>
<use href="#rv" x="451" y="919" width="22" height="22"/>
<use href="#al" x="481" y="919" width="22" height="22"/><use href="#mv" x="513" y="921" width="18" height="18"/>
<use href="#al" x="541" y="919" width="22" height="22"/><use href="#mv" x="573" y="921" width="18" height="18"/>
<use href="#al" x="601" y="919" width="22" height="22"/><use href="#mv" x="633" y="921" width="18" height="18"/>
<use href="#al" x="661" y="919" width="22" height="22"/><use href="#mv" x="693" y="921" width="18" height="18"/>
<use href="#al" x="721" y="919" width="22" height="22"/><use href="#mv" x="753" y="921" width="18" height="18"/><use href="#mv" x="783" y="921" width="18" height="18"/>
<use href="#sk" x="811" y="919" width="22" height="22"/>
<use href="#ext" x="841" y="919" width="22" height="22"/>
<use href="#cb" x="871" y="919" width="22" height="22"/>
<use href="#bx" x="901" y="919" width="22" height="22"/>
<use href="#cn" x="931" y="919" width="22" height="22"/>
<use href="#sk" x="961" y="919" width="22" height="22"/><use href="#ext" x="991" y="919" width="22" height="22"/>
<use href="#sk" x="1021" y="919" width="22" height="22"/><use href="#ext" x="1051" y="919" width="22" height="22"/>
<use href="#sk" x="1081" y="919" width="22" height="22"/><use href="#ext" x="1111" y="919" width="22" height="22"/><use href="#ext" x="1141" y="919" width="22" height="22"/>
<use href="#sk" x="1171" y="919" width="22" height="22"/><use href="#ext" x="1201" y="919" width="22" height="22"/>
<use href="#bx" x="1231" y="919" width="22" height="22"/>
<use href="#sk" x="1261" y="919" width="22" height="22"/><use href="#ext" x="1291" y="919" width="22" height="22"/><use href="#ext" x="1321" y="919" width="22" height="22"/>
<use href="#sk" x="1351" y="919" width="22" height="22"/><use href="#ext" x="1381" y="919" width="22" height="22"/><use href="#ext" x="1411" y="919" width="22" height="22"/><use href="#ext" x="1441" y="919" width="22" height="22"/>
<use href="#sk" x="1471" y="919" width="22" height="22"/><use href="#ext" x="1501" y="919" width="22" height="22"/>
<use href="#sk" x="1531" y="919" width="22" height="22"/><use href="#ext" x="1561" y="919" width="22" height="22"/>
<use href="#sk" x="1591" y="919" width="22" height="22"/><use href="#ext" x="1621" y="919" width="22" height="22"/>
<use href="#sk" x="1651" y="919" width="22" height="22"/><use href="#ext" x="1681" y="919" width="22" height="22"/>
<use href="#sk" x="1711" y="919" width="22" height="22"/><use href="#ext" x="1741" y="919" width="22" height="22"/>
<use href="#fl" x="1771" y="919" width="22" height="22"/><use href="#fl" x="1801" y="919" width="22" height="22"/><use href="#fl" x="1831" y="919" width="22" height="22"/>
</g>
<!-- marker -->
<polygon points="1849,913 1864,913 1864,918 1858.5,925 1854.5,925 1849,918" fill="#5a5a5a"/>
<rect x="1855.5" y="924" width="2.5" height="29" fill="#5a5a5a"/>
<!-- gear -->
<g transform="translate(1893,937)" fill="#8d8d8d"><circle r="7.5"/><g stroke="#8d8d8d" stroke-width="3.6"><path d="M0,-10V10M-10,0H10M-7,-7L7,7M-7,7L7,-7"/></g><circle r="3.5" fill="#f1f1f1"/></g>
</svg>
</body></html>
